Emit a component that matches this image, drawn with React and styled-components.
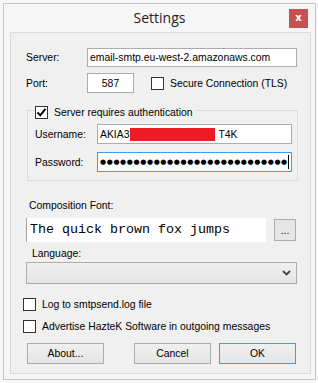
import React from "react";
import styled, { createGlobalStyle } from "styled-components";

const GlobalStyle = createGlobalStyle`
  html, body {
    margin: 0;
    padding: 0;
  }
  body {
    font-family: "Liberation Sans", Arial, sans-serif;
    font-size: 10.4px;
    color: #000;
  }
`;

const Desk = styled.div`
  width: 318px;
  height: 383px;
  box-sizing: border-box;
  padding: 3px 2px 3px 3px;
  background: #f7f7f7;
  overflow: hidden;
`;

const Window = styled.div`
  width: 313px;
  height: 377px;
  box-sizing: border-box;
  border: 1px solid #c6c6c6;
  background: #f6f6f6;
  display: flex;
  flex-direction: column;
  padding: 0 4px 5px 6px;
`;

const TitleBar = styled.div`
  height: 28px;
  display: grid;
  grid-template-columns: 1fr auto 1fr;
  align-items: center;
  margin-left: -6px;
  margin-right: -4px;
`;

const Title = styled.div`
  grid-column: 2;
  font-family: "Open Sans", "Noto Sans", sans-serif;
  font-size: 14px;
  color: #222;
  padding-bottom: 1px;
`;

const CloseButton = styled.div`
  grid-column: 3;
  justify-self: end;
  align-self: start;
  margin-top: 5px;
  margin-right: 7px;
  width: 19px;
  height: 19px;
  background: #c75050;
  color: #fff;
  font-family: "DejaVu Sans", sans-serif;
  font-weight: bold;
  font-size: 10px;
  display: flex;
  align-items: center;
  justify-content: center;
  padding-bottom: 2px;
  box-sizing: border-box;
`;

const Client = styled.div`
  height: 342px;
  box-sizing: border-box;
  border: 1px solid #dadada;
  background: #f0f0f0;
  padding-top: 15px;
  display: flex;
  flex-direction: column;
`;

const Row = styled.div`
  display: flex;
  align-items: center;
  margin-top: ${(p) => p.top || 0}px;
  margin-left: ${(p) => p.left || 0}px;
`;

const Label = styled.span`
  width: ${(p) => p.width}px;
  flex: none;
  line-height: 13px;
`;

const TextBox = styled.div`
  width: ${(p) => p.width}px;
  height: ${(p) => p.height || 20}px;
  box-sizing: border-box;
  border: 1px solid ${(p) => (p.focused ? "#3c9cf0" : "#acacac")};
  background: #fff;
  display: flex;
  align-items: center;
  justify-content: ${(p) => (p.center ? "center" : "flex-start")};
  padding-left: ${(p) => (p.center ? 0 : 2)}px;
  white-space: nowrap;
  overflow: hidden;
`;

const Box = styled.span`
  width: 13px;
  height: 13px;
  flex: none;
  box-sizing: border-box;
  border: 1px solid #333;
  background: #fff;
  display: flex;
  align-items: center;
  justify-content: center;
`;

const CheckLabel = styled.span`
  margin-left: ${(p) => p.gap || 6}px;
  line-height: 13px;
  white-space: nowrap;
`;

const Spacer = styled.span`
  width: ${(p) => p.width}px;
  flex: none;
`;

const Group = styled.div`
  position: relative;
  margin: 17px 0 0 16px;
  width: 271px;
  height: 71px;
  box-sizing: border-box;
  border: 1px solid #dcdcdc;
  padding: 13px 5px 8px 7px;
  display: flex;
  flex-direction: column;
  gap: 8px;
`;

const Legend = styled.div`
  position: absolute;
  top: -5px;
  left: 7px;
  display: flex;
  align-items: center;
  padding-right: 3px;
  background: #f0f0f0;
`;

const Redacted = styled.span`
  display: inline-block;
  width: 85px;
  height: 13px;
  background: #ed1c24;
  margin: 0 3px 0 1px;
`;

const Dots = styled.span`
  font-family: "DejaVu Sans", sans-serif;
  font-size: 7px;
  letter-spacing: 0.6px;
  color: #000;
`;

const Caret = styled.span`
  width: 1px;
  height: 14px;
  background: #000;
  flex: none;
`;

const FontBox = styled.div`
  width: 240px;
  height: 24px;
  box-sizing: border-box;
  background: #fff;
  border-left: 1px solid #a0a0a0;
  display: flex;
  align-items: center;
  padding: 0 0 2px 3px;
  font-family: "Liberation Mono", "Courier New", monospace;
  font-size: 13.33px;
  white-space: nowrap;
`;

const Button = styled.div`
  width: ${(p) => p.width || 77}px;
  height: ${(p) => p.height || 21}px;
  margin-left: ${(p) => p.left || 0}px;
  box-sizing: border-box;
  border: 1px solid ${(p) => (p.primary ? "#3c9cf0" : "#acacac")};
  background: linear-gradient(#f0f0f0, #e5e5e5);
  display: flex;
  align-items: center;
  justify-content: center;
  flex: none;
`;

const EllipsisButton = styled(Button)`
  align-items: flex-end;
  padding-bottom: 4px;
  background: #e6e6e6;
`;

const Select = styled.div`
  margin: 2px 0 0 15px;
  width: 271px;
  height: 22px;
  box-sizing: border-box;
  border: 1px solid #acacac;
  background: linear-gradient(#f0f0f0, #e5e5e5);
  display: flex;
  align-items: center;
  justify-content: flex-end;
  padding-right: 5px;
`;

const TextLine = styled.div`
  margin-top: ${(p) => p.top}px;
  margin-left: ${(p) => p.left}px;
  line-height: 13px;
`;

const CheckBox = ({ checked }) => (
  <Box>
    {checked && (
      <svg width="11" height="11" viewBox="0 0 11 11">
        <path d="M1.5 5.5 L4.2 8.3 L9.5 1.8" fill="none" stroke="#000" strokeWidth="2" />
      </svg>
    )}
  </Box>
);

const Chevron = () => (
  <svg width="9" height="6" viewBox="0 0 9 6">
    <path d="M1 1 L4.5 4.5 L8 1" fill="none" stroke="#444" strokeWidth="1.8" />
  </svg>
);

export default function App() {
  return (
    <Desk>
      <GlobalStyle />
      <Window>
        <TitleBar>
          <Title>Settings</Title>
          <CloseButton>x</CloseButton>
        </TitleBar>
        <Client>
          <Row left={15}>
            <Label width={61}>Server:</Label>
            <TextBox width={210} height={19}>email-smtp.eu-west-2.amazonaws.com</TextBox>
          </Row>
          <Row left={15} top={6}>
            <Label width={61}>Port:</Label>
            <TextBox width={47} center>587</TextBox>
            <Spacer width={17} />
            <CheckBox />
            <CheckLabel>Secure Connection (TLS)</CheckLabel>
          </Row>

          <Group>
            <Legend>
              <CheckBox checked />
              <CheckLabel>Server requires authentication</CheckLabel>
            </Legend>
            <Row>
              <Label width={62}>Username:</Label>
              <TextBox width={195}>
                AKIA3<Redacted />T4K
              </TextBox>
            </Row>
            <Row>
              <Label width={62}>Password:</Label>
              <TextBox width={195} focused>
                <Dots>{"●".repeat(28)}</Dots>
                <Caret />
              </TextBox>
            </Row>
          </Group>

          <TextLine top={18} left={18}>Composition Font:</TextLine>
          <Row left={15} top={6}>
            <FontBox>The quick brown fox jumps</FontBox>
            <EllipsisButton width={22} height={22} left={8}>...</EllipsisButton>
          </Row>
          <TextLine top={5} left={21}>Language:</TextLine>
          <Select>
            <Chevron />
          </Select>

          <Row left={12} top={14}>
            <CheckBox />
            <CheckLabel>Log to smtpsend.log file</CheckLabel>
          </Row>
          <Row left={12} top={9}>
            <CheckBox />
            <CheckLabel>Advertise HazteK Software in outgoing messages</CheckLabel>
          </Row>

          <Row left={16} top={10}>
            <Button>About...</Button>
            <Button left={30}>Cancel</Button>
            <Button left={8} primary>OK</Button>
          </Row>
        </Client>
      </Window>
    </Desk>
  );
}
